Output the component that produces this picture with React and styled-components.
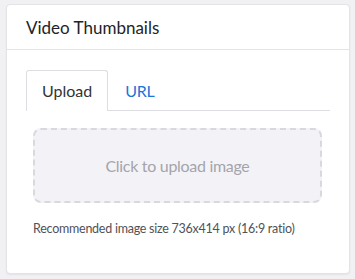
import styled, { createGlobalStyle } from "styled-components";
import { useState } from "react";

const GlobalStyle = createGlobalStyle`
  body {
    margin: 0;
    background: #f1f1f4;
    font-family: Lato, "Liberation Sans", sans-serif;
  }
`;

const Page = styled.div`
  padding: 4px 5px 4px 6px;
`;

const Card = styled.section`
  background: #ffffff;
  border: 1px solid #e3e3e8;
  border-radius: 4px;
  box-shadow: 0 1px 2px rgba(0, 0, 0, 0.06);
  height: 270px;
  box-sizing: border-box;
`;

const CardHeader = styled.header`
  height: 45px;
  box-sizing: border-box;
  border-bottom: 1px solid #e3e3e8;
  padding: 0 19px;
  display: flex;
  align-items: center;
  color: #222428;
  font-size: 17px;
`;

const CardBody = styled.div`
  padding: 20px 19px 0 19px;
`;

const TabList = styled.div`
  display: flex;
  align-items: flex-start;
  border-bottom: 1px solid #dddde2;
  height: 41px;
  box-sizing: border-box;
`;

const Tab = styled.button`
  font: inherit;
  font-size: 16px;
  background: ${(p) => (p.active ? "#fff" : "transparent")};
  padding: 0 ${(p) => (p.active ? "15px" : "16px")};
  box-sizing: border-box;
  cursor: pointer;
  border: 1px solid ${(p) => (p.active ? "#dddde2" : "transparent")};
  border-bottom: none;
  border-radius: 3px 3px 0 0;
  color: ${(p) => (p.active ? "#333" : "#1c74d8")};
  height: ${(p) => (p.active ? "41px" : "40px")};
  padding-bottom: ${(p) => (p.active ? "1px" : "0")};
  letter-spacing: ${(p) => (p.active ? "0" : "-0.3px")};
  position: relative;
  z-index: ${(p) => (p.active ? 1 : 0)};
`;

const DropZone = styled.div`
  margin: 17px 8px 0 7px;
  height: 75px;
  box-sizing: border-box;
  border: 2px dashed #d8d8df;
  border-radius: 8px;
  background: #f3f3f7;
  display: flex;
  align-items: center;
  justify-content: center;
  color: #a4a4aa;
  font-size: 16px;
  letter-spacing: -0.3px;
  cursor: pointer;
`;

const Hint = styled.p`
  margin: 18px 0 0 7px;
  font-size: 12.5px;
  letter-spacing: -0.25px;
  color: #505258;
`;

const App = () => {
  const [tab, setTab] = useState("upload");

  return (
    <Page>
      <GlobalStyle />
      <Card>
        <CardHeader>Video Thumbnails</CardHeader>
        <CardBody>
          <TabList>
            <Tab active={tab === "upload"} onClick={() => setTab("upload")}>
              Upload
            </Tab>
            <Tab active={tab === "url"} onClick={() => setTab("url")}>
              URL
            </Tab>
          </TabList>
          <DropZone>Click to upload image</DropZone>
          <Hint>Recommended image size 736x414 px (16:9 ratio)</Hint>
        </CardBody>
      </Card>
    </Page>
  );
};

export default App;
